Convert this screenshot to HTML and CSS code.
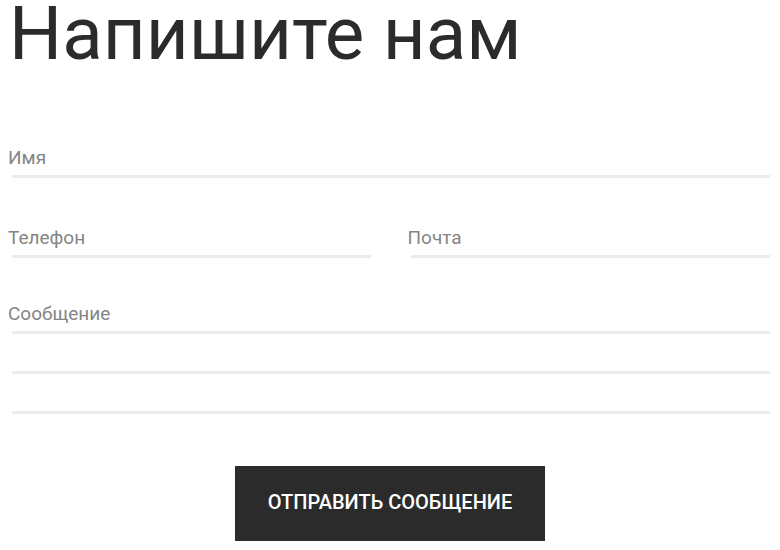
FILE: index.html
```html
<!DOCTYPE html>
<html lang="ru">
<head>
<meta charset="utf-8">
<title>Напишите нам</title>
<link rel="stylesheet" href="styles.css">
</head>
<body>
<main class="page">
  <h1 class="title">Напишите нам</h1>
  <form class="form">
    <div class="field field-name">
      <label class="label">Имя</label>
      <div class="line"></div>
    </div>
    <div class="row">
      <div class="field">
        <label class="label">Телефон</label>
        <div class="line"></div>
      </div>
      <div class="field field-right">
        <label class="label">Почта</label>
        <div class="line"></div>
      </div>
    </div>
    <div class="field field-message">
      <label class="label">Сообщение</label>
      <div class="line"></div>
      <div class="line line-extra"></div>
      <div class="line line-extra"></div>
    </div>
    <div class="actions">
      <button type="button" class="submit">Отправить сообщение</button>
    </div>
  </form>
</main>
</body>
</html>
```

FILE: styles.css
```css
html, body {
  margin: 0;
  padding: 0;
  background: #ffffff;
}

body {
  font-family: Roboto, "Noto Sans", "Liberation Sans", sans-serif;
  color: #2b2b2b;
}

.page {
  width: 780px;
  box-sizing: border-box;
  padding: 0 10px 0 8px;
}

.title {
  margin: 0;
  font-size: 74.5px;
  font-weight: 400;
  line-height: 0.9;
  color: #2b2b2b;
  padding-left: 1px;
}

.form {
  display: flex;
  flex-direction: column;
}

.field {
  display: flex;
  flex-direction: column;
}

.label {
  font-size: 19px;
  line-height: 20px;
  color: #858585;
  margin-bottom: 7px;
}

.line {
  height: 3px;
  background: #ebebeb;
  margin-left: 4px;
}

.field-right .line {
  margin-left: 3px;
}

.field-name {
  margin-top: 81px;
}

.row {
  margin-top: 50px;
  display: grid;
  grid-template-columns: 1fr 1fr;
  column-gap: 37px;
}

.field-message {
  margin-top: 46px;
}

.line-extra {
  margin-top: 37px;
}

.actions {
  margin-top: 52px;
  display: flex;
  justify-content: center;
  padding-left: 2px;
}

.submit {
  width: 310px;
  height: 75px;
  border: none;
  background: #2b2b2b;
  color: #ffffff;
  font-family: Roboto, "Noto Sans", "Liberation Sans", sans-serif;
  font-size: 20px;
  font-weight: 500;
  text-transform: uppercase;
  letter-spacing: 0;
  padding: 0 0 3px;
  cursor: pointer;
}
```
